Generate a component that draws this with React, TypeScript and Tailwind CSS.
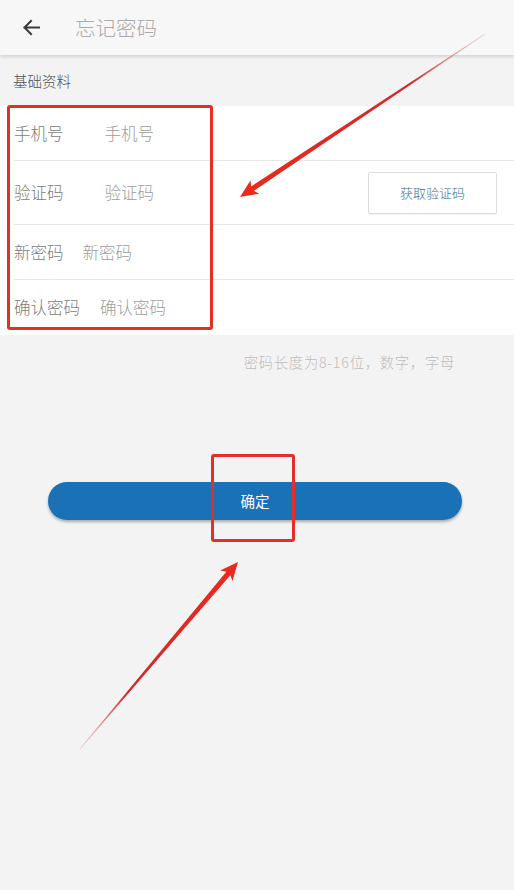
import React from "react";

type Pt = [number, number];

function arrowPoints(t: Pt, p: Pt, headLen = 18, headHalf = 8, shaftHalf = 2.6, tailHalf = 0.3): string {
  const dx = p[0] - t[0];
  const dy = p[1] - t[1];
  const len = Math.sqrt(dx * dx + dy * dy);
  const ux = dx / len;
  const uy = dy / len;
  const nx = -uy;
  const ny = ux;
  const bx = p[0] - ux * headLen;
  const by = p[1] - uy * headLen;
  const pts: Pt[] = [
    [t[0] + nx * tailHalf, t[1] + ny * tailHalf],
    [bx + ux * 3 + nx * shaftHalf, by + uy * 3 + ny * shaftHalf],
    [bx + nx * headHalf, by + ny * headHalf],
    [p[0], p[1]],
    [bx - nx * headHalf, by - ny * headHalf],
    [bx + ux * 3 - nx * shaftHalf, by + uy * 3 - ny * shaftHalf],
    [t[0] - nx * tailHalf, t[1] - ny * tailHalf],
  ];
  return pts.map((q) => `${q[0].toFixed(2)},${q[1].toFixed(2)}`).join(" ");
}

const font = { fontFamily: '"Noto Sans CJK SC", "Noto Sans", sans-serif' };

function Row({
  label,
  placeholder,
  gap,
  height,
  right,
  last,
}: {
  label: string;
  placeholder: string;
  gap: string;
  height: string;
  right?: React.ReactNode;
  last?: boolean;
}) {
  return (
    <div className="ml-[14px]">
      <div className={`flex items-center ${height}`}>
        <span className="text-[16.5px] font-light text-[#7c7c7c] whitespace-nowrap">{label}</span>
        <span className={`${gap} text-[16.5px] font-light text-[#9c9c9c] whitespace-nowrap`}>{placeholder}</span>
        <div className="flex-1" />
        {right}
      </div>
      {!last && <div className="h-px bg-[#e6e6e6]" />}
    </div>
  );
}

export default function App() {
  return (
    <div className="relative w-[514px] min-h-[890px] bg-[#f4f3f3] overflow-hidden" style={font}>
      {/* Header */}
      <div className="relative z-10 flex h-[55px] items-center bg-[#f7f7f7] pl-[22px] shadow-[0_2px_3px_rgba(0,0,0,0.13)]">
        <svg width="18" height="17" viewBox="0 0 18 17" fill="none">
          <path d="M17 8.5H2.5M9 2L2.5 8.5L9 15" stroke="#3a3a3a" strokeWidth="2" strokeLinecap="square" />
        </svg>
        <span className="ml-[35px] text-[20.5px] font-light text-[#aaaaaa]">忘记密码</span>
      </div>

      {/* Section label */}
      <div className="flex h-[51px] items-center pl-[13px] text-[14.5px] font-light text-[#505050]">基础资料</div>

      {/* Form card */}
      <div className="bg-white">
        <Row label="手机号" placeholder="手机号" gap="ml-[41px]" height="h-[54px]" />
        <Row
          label="验证码"
          placeholder="验证码"
          gap="ml-[41px]"
          height="h-[63px]"
          right={
            <button className="mr-[17px] flex h-[42px] w-[129px] items-center justify-center rounded-[2px] border border-[#dcdcdc] bg-white text-[13px] font-light text-[#3c6f9c] shadow-[0_1px_1px_rgba(0,0,0,0.05)]">
              获取验证码
            </button>
          }
        />
        <Row label="新密码" placeholder="新密码" gap="ml-[19px]" height="h-[54px]" />
        <Row label="确认密码" placeholder="确认密码" gap="ml-[20px]" height="h-[55px]" last />
      </div>

      {/* Hint */}
      <div className="flex h-[54px] items-center justify-end pr-[59px] text-[14.3px] font-light tracking-[0.75px] text-[#bdbdbd]">
        密码长度为8-16位，数字，字母
      </div>

      {/* Confirm button */}
      <div className="mt-[93px] flex pl-[48px]">
        <button className="flex h-[38px] w-[414px] items-center justify-center rounded-full bg-[#1b71b6] text-[14.5px] text-white shadow-[0_2px_3px_rgba(0,0,0,0.3)]">
          确定
        </button>
      </div>

      {/* Annotation boxes */}
      <div className="pointer-events-none absolute z-20 left-[7px] top-[105px] h-[225px] w-[206px] rounded-[3px] border-[3px] border-[#e22f28]" />
      <div className="pointer-events-none absolute z-20 left-[211px] top-[454px] h-[88px] w-[84px] rounded-[3px] border-[3px] border-[#e22f28]" />

      {/* Annotation arrows */}
      <svg className="pointer-events-none absolute z-20 left-0 top-0" width="514" height="890" viewBox="0 0 514 890">
        <defs>
          <linearGradient id="g1" gradientUnits="userSpaceOnUse" x1="485" y1="34" x2="240" y2="197">
            <stop offset="0" stopColor="#d9a0a0" stopOpacity="0.5" />
            <stop offset="0.3" stopColor="#cf2a2a" />
            <stop offset="1" stopColor="#ec2a1e" />
          </linearGradient>
          <linearGradient id="g2" gradientUnits="userSpaceOnUse" x1="80" y1="749" x2="238" y2="562">
            <stop offset="0" stopColor="#d9a0a0" stopOpacity="0.5" />
            <stop offset="0.3" stopColor="#cf2a2a" />
            <stop offset="1" stopColor="#ec2a1e" />
          </linearGradient>
        </defs>
        <polygon points={arrowPoints([485, 34], [240, 197])} fill="url(#g1)" />
        <polygon points={arrowPoints([80, 749], [238, 562])} fill="url(#g2)" />
      </svg>
    </div>
  );
}
